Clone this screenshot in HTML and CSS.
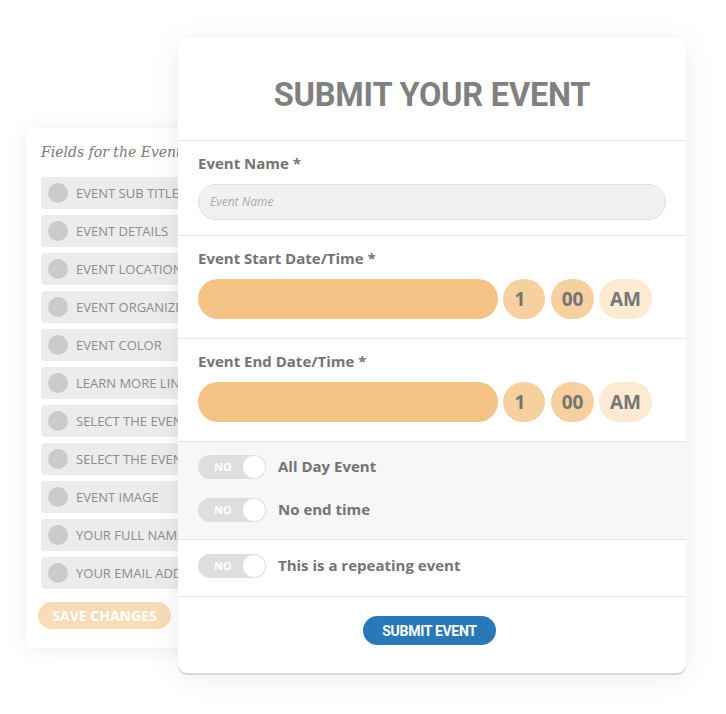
FILE: index.html
```html
<!DOCTYPE html>
<html lang="en">
<head>
<meta charset="utf-8">
<title>Submit your event</title>
<link rel="stylesheet" href="styles.css">
</head>
<body>
<div class="stage">
  <aside class="fields-card">
    <h2 class="fields-title">Fields for the Event</h2>
    <ul class="field-list">
      <li class="field-item"><span class="dot"></span><span class="field-name">EVENT SUB TITLE</span></li>
      <li class="field-item"><span class="dot"></span><span class="field-name">EVENT DETAILS</span></li>
      <li class="field-item"><span class="dot"></span><span class="field-name">EVENT LOCATION</span></li>
      <li class="field-item"><span class="dot"></span><span class="field-name">EVENT ORGANIZER</span></li>
      <li class="field-item"><span class="dot"></span><span class="field-name">EVENT COLOR</span></li>
      <li class="field-item"><span class="dot"></span><span class="field-name">LEARN MORE LINK</span></li>
      <li class="field-item"><span class="dot"></span><span class="field-name">SELECT THE EVENT TYPE</span></li>
      <li class="field-item"><span class="dot"></span><span class="field-name">SELECT THE EVENT TAG</span></li>
      <li class="field-item"><span class="dot"></span><span class="field-name">EVENT IMAGE</span></li>
      <li class="field-item"><span class="dot"></span><span class="field-name">YOUR FULL NAME</span></li>
      <li class="field-item"><span class="dot"></span><span class="field-name">YOUR EMAIL ADDRESS</span></li>
    </ul>
    <button class="save-btn">SAVE CHANGES</button>
  </aside>

  <main class="form-card">
    <header class="form-head">
      <h1 class="form-title">SUBMIT YOUR EVENT</h1>
    </header>
    <section class="row row-name">
      <label class="lbl">Event Name *</label>
      <div class="text-input">Event Name</div>
    </section>
    <section class="row row-date">
      <label class="lbl">Event Start Date/Time *</label>
      <div class="date-line">
        <div class="date-bar"></div>
        <div class="pill pill-h">1</div>
        <div class="pill pill-m">00</div>
        <div class="pill pill-ap">AM</div>
      </div>
    </section>
    <section class="row row-date">
      <label class="lbl">Event End Date/Time *</label>
      <div class="date-line">
        <div class="date-bar"></div>
        <div class="pill pill-h">1</div>
        <div class="pill pill-m">00</div>
        <div class="pill pill-ap">AM</div>
      </div>
    </section>
    <section class="row row-toggles shaded">
      <div class="toggle-line"><span class="toggle"><span class="toggle-no">NO</span><span class="knob"></span></span><span class="toggle-lbl">All Day Event</span></div>
      <div class="toggle-line"><span class="toggle"><span class="toggle-no">NO</span><span class="knob"></span></span><span class="toggle-lbl">No end time</span></div>
    </section>
    <section class="row row-repeat">
      <div class="toggle-line"><span class="toggle"><span class="toggle-no">NO</span><span class="knob"></span></span><span class="toggle-lbl">This is a repeating event</span></div>
    </section>
    <footer class="form-foot">
      <button class="submit-btn">SUBMIT EVENT</button>
    </footer>
  </main>
</div>
</body>
</html>
```
FILE: styles.css
```css
* { box-sizing: border-box; }
html, body { margin: 0; padding: 0; background: #ffffff; }
body { width: 726px; height: 714px; overflow: hidden; font-family: "Open Sans", "Liberation Sans", sans-serif; }

.stage { position: relative; width: 726px; height: 714px; }

/* Back card */
.fields-card {
  position: absolute;
  left: 26px; top: 128px;
  width: 170px; height: 520px;
  background: #fff;
  border-radius: 9px;
  box-shadow: 0 2px 22px rgba(0,0,0,0.07);
  padding: 14px 0 0 15px;
  overflow: hidden;
}
.fields-title {
  margin: 0;
  font-family: "DejaVu Serif", "Liberation Serif", serif;
  font-style: italic;
  font-weight: normal;
  font-size: 14px;
  line-height: 20px;
  color: #7a7a7a;
  white-space: nowrap;
}
.field-list {
  list-style: none;
  margin: 15px 0 0;
  padding: 0;
  display: flex;
  flex-direction: column;
  gap: 6px;
}
.field-item {
  height: 32px;
  display: flex;
  align-items: center;
  gap: 8px;
  padding-left: 7px;
  background: #ececec;
  border-radius: 4px 0 0 4px;
  font-size: 13px;
  color: #8d8d8d;
  white-space: nowrap;
  overflow: hidden;
}
.dot { width: 20px; height: 20px; border-radius: 50%; background: #cbcbcb; flex: none; }
.save-btn {
  margin: 13px 0 0 -3px;
  width: 133px; height: 27px;
  border: 0;
  border-radius: 14px;
  background: #f8dcb8;
  color: #fff;
  font-family: "Open Sans", sans-serif;
  font-weight: 700;
  font-size: 14px;
  padding: 0;
}

/* Front card */
.form-card {
  position: absolute;
  left: 178px; top: 38px;
  width: 508px; height: 635px;
  background: #fff;
  border-radius: 9px;
  box-shadow: 0 2px 0 #d9d9d9, 0 4px 30px rgba(0,0,0,0.08);
  overflow: hidden;
  display: flex;
  flex-direction: column;
}
.form-head {
  height: 103px;
  border-bottom: 1px solid #e5e5e5;
  display: flex;
  justify-content: center;
  padding-top: 39px;
}
.form-title {
  margin: 0;
  font-family: Roboto, "Liberation Sans", sans-serif;
  font-weight: 700;
  font-size: 32.5px;
  line-height: 36px;
  color: #808080;
  letter-spacing: -0.2px;
}
.row { border-bottom: 1px solid #e5e5e5; padding: 0 20px; }
.lbl {
  display: block;
  font-weight: 700;
  font-size: 15px;
  line-height: 20px;
  color: #747474;
}
.row-name { padding-top: 12px; padding-bottom: 15px; }
.row-name .lbl { margin-bottom: 11px; }
.text-input {
  height: 36px;
  border: 1px solid #dedede;
  background: #f1f1f1;
  border-radius: 18px;
  padding-left: 11px;
  font-style: italic;
  font-size: 12px;
  line-height: 34px;
  color: #ababab;
}
.row-date { padding-top: 12px; padding-bottom: 19px; }
.row-date .lbl { margin-bottom: 11px; }
.date-line { display: flex; align-items: center; }
.date-bar { width: 300px; height: 40px; border-radius: 20px; background: #f5c385; }
.pill {
  height: 40px;
  border-radius: 20px;
  display: flex; align-items: center; justify-content: center;
  font-weight: 700; font-size: 19px; color: #757575;
}
.pill-h { width: 42px; margin-left: 5px; background: #f7d09f; padding-right: 8px; }
.pill-m { width: 43px; margin-left: 6px; background: #f7d09f; }
.pill-ap { width: 53px; margin-left: 5px; background: #fdead2; }

.shaded { background: #f7f7f7; }
.row-toggles { padding-top: 13px; padding-bottom: 17px; display: flex; flex-direction: column; gap: 19px; }
.row-repeat { padding-top: 14px; padding-bottom: 18px; }
.toggle-line { display: flex; align-items: center; gap: 12px; height: 24px; }
.toggle {
  position: relative;
  width: 68px; height: 24px;
  border-radius: 12px;
  background: #dedede;
  flex: none;
}
.toggle-no {
  position: absolute; left: 16px; top: 0;
  font-weight: 700; font-size: 11px; line-height: 24px; color: #fff;
}
.knob {
  position: absolute; right: 1px; top: 1px;
  width: 22px; height: 22px; border-radius: 50%;
  background: #fff;
  box-shadow: 0 0 0 1px #e2e2e2;
}
.toggle-lbl { font-weight: 700; font-size: 15px; color: #747474; margin-top: -2px; }

.form-foot { flex: 1; display: flex; justify-content: center; padding-top: 19px; padding-right: 5px; }
.submit-btn {
  width: 133px; height: 29px;
  border: 0; border-radius: 15px;
  background: #2979b9;
  color: #fff;
  font-family: Roboto, "Liberation Sans", sans-serif;
  font-weight: 700; font-size: 14px;
  letter-spacing: -0.3px;
  padding: 0;
}
```
